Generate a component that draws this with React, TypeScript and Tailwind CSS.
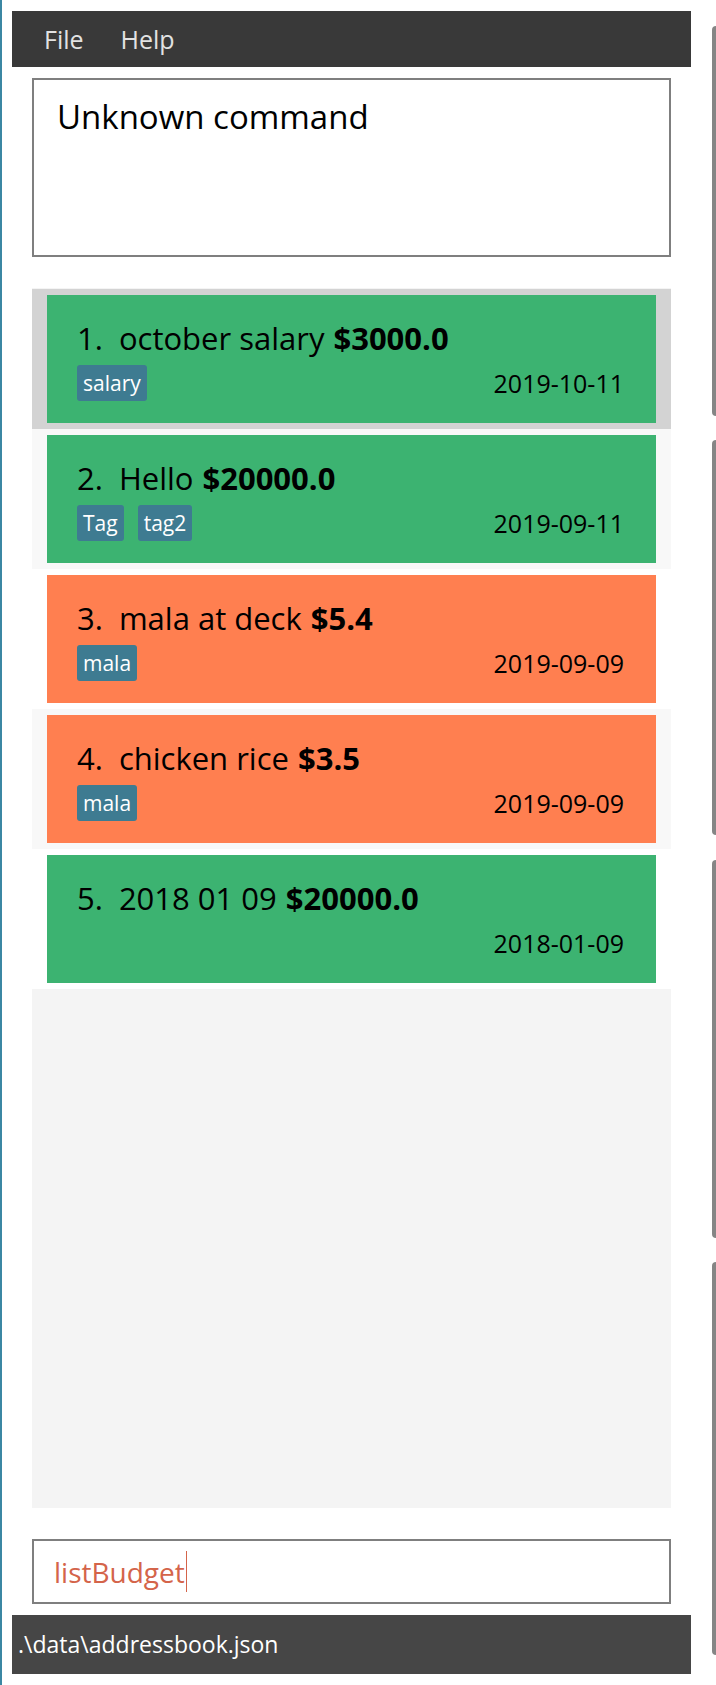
import React from "react";

type Item = {
  id: number;
  name: string;
  amount: string;
  tags: string[];
  date: string;
  income: boolean;
};

const items: Item[] = [
  { id: 1, name: "october salary", amount: "$3000.0", tags: ["salary"], date: "2019-10-11", income: true },
  { id: 2, name: "Hello", amount: "$20000.0", tags: ["Tag", "tag2"], date: "2019-09-11", income: true },
  { id: 3, name: "mala at deck", amount: "$5.4", tags: ["mala"], date: "2019-09-09", income: false },
  { id: 4, name: "chicken rice", amount: "$3.5", tags: ["mala"], date: "2019-09-09", income: false },
  { id: 5, name: "2018 01 09", amount: "$20000.0", tags: [], date: "2018-01-09", income: true },
];

function Card({ item, index }: { item: Item; index: number }) {
  const cellBg = index === 0 ? "bg-[#d3d3d3]" : index % 2 === 1 ? "bg-[#f8f8f8]" : "bg-white";
  const cardBg = item.income ? "bg-[#3cb371]" : "bg-[#ff7f50]";
  return (
    <div className={`${cellBg} pt-[6px] pb-[6px] pl-[15px] pr-[15px]`}>
      <div className={`${cardBg} h-[128px] pl-[30px] pr-[32px] pt-[25px] flex flex-col`}>
        <div className="flex items-baseline text-[31px] leading-[37px] text-black">
          <span>{item.id}.</span>
          <span className="ml-[16px]">{item.name}</span>
          <span className="ml-[9px] font-bold">{item.amount}</span>
        </div>
        <div className="mt-[8px] flex items-start justify-between h-[36px]">
          <div className="flex gap-[14px]">
            {item.tags.map((t) => (
              <span
                key={t}
                className="bg-[#3e7b91] text-white text-[21px] leading-[36px] px-[6px] rounded-[3px]"
              >
                {t}
              </span>
            ))}
          </div>
          <span className="text-[25px] leading-[36px] text-black">{item.date}</span>
        </div>
      </div>
    </div>
  );
}

export default function App() {
  return (
    <div
      className="w-[716px] h-[1685px] flex bg-white overflow-hidden"
      style={{ fontFamily: '"Open Sans", "Noto Sans", sans-serif' }}
    >
      <div className="w-[2px] bg-[#3b87a3] shrink-0" />
      <div className="w-[709px] shrink-0 flex flex-col pl-[10px] pr-[20px] pt-[11px]">
        <div className="h-[56px] bg-[#393939] flex items-center pt-[2px] pl-[32px] text-[25px] text-[#e2e2e2]">
          <span>File</span>
          <span className="ml-[37px]">Help</span>
        </div>
        <div className="mx-[20px] mt-[11px] h-[179px] border-2 border-[#7f7f7f] pl-[23px] pt-[12px] text-[33px] text-black">
          Unknown command
        </div>
        <div className="mx-[20px] mt-[31px] h-[1220px] bg-[#f4f4f4] pt-[1px] flex flex-col">
          {items.map((it, i) => (
            <Card key={it.id} item={it} index={i} />
          ))}
        </div>
        <div className="mx-[20px] mt-[31px] h-[65px] border-2 border-[#7f7f7f] flex items-center pl-[20px] text-[28px] text-[#d4644a]">
          <span>listBudget</span>
          <span className="w-[1px] h-[41px] bg-[#d4644a] ml-[1px]" />
        </div>
        <div className="mt-[11px] h-[59px] bg-[#464646] flex items-center pl-[6px] text-[23px] text-white">
          .\data\addressbook.json
        </div>
      </div>
      <div className="flex-1 flex flex-col pl-[1px]">
        <div className="mt-[26px] h-[390px] bg-[#858585] rounded-l-[12px]" />
        <div className="mt-[24px] h-[395px] bg-[#858585] rounded-l-[12px]" />
        <div className="mt-[25px] h-[378px] bg-[#858585] rounded-l-[12px]" />
        <div className="mt-[24px] h-[393px] bg-[#858585] rounded-l-[12px]" />
      </div>
    </div>
  );
}
